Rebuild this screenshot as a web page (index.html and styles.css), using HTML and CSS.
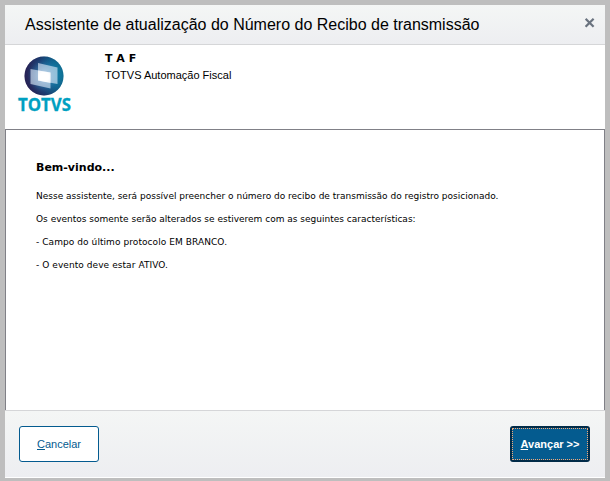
FILE: index.html
```html
<!DOCTYPE html>
<html lang="pt-BR">
<head>
<meta charset="UTF-8" />
<meta name="viewport" content="width=device-width, initial-scale=1" />
<title>Assistente de atualização</title>
<link rel="stylesheet" href="styles.css">
</head>
<body>

<div class="dialog" role="dialog" aria-labelledby="dialog-title">
  <!-- Title bar -->
  <header class="title-bar">
    <h1 id="dialog-title">Assistente de atualização do Número do Recibo de transmissão</h1>
    <button class="close-btn" aria-label="Fechar">
      <svg width="10" height="10" viewBox="0 0 10 10">
        <path d="M0.6 0.8 L8.6 8.8 M8.6 0.8 L0.6 8.8" stroke="#6a737f" stroke-width="2.2" />
      </svg>
    </button>
  </header>

  <!-- Product logo and name -->
  <section class="product">
    <svg class="logo" width="76" height="68" viewBox="0 0 76 68">
      <defs>
        <linearGradient id="ball" x1="0.1" y1="0.6" x2="1" y2="0.45">
          <stop offset="0" stop-color="#2a2458" />
          <stop offset="0.4" stop-color="#1c4378" />
          <stop offset="0.75" stop-color="#0a80a8" />
          <stop offset="1" stop-color="#08a0bd" />
        </linearGradient>
        <radialGradient id="shade" cx="0.5" cy="0.5" r="0.5">
          <stop offset="0" stop-color="#8cc4e6" stop-opacity="0.9" />
          <stop offset="0.6" stop-color="#2f76a8" stop-opacity="0.4" />
          <stop offset="0.85" stop-color="#1d2f62" stop-opacity="0.3" />
          <stop offset="1" stop-color="#211c4c" stop-opacity="0.4" />
        </radialGradient>
        <radialGradient id="glow" cx="0.5" cy="0.5" r="0.75">
          <stop offset="0.5" stop-color="#fff" />
          <stop offset="1" stop-color="#fff" stop-opacity="0.6" />
        </radialGradient>
      </defs>
      <circle cx="27" cy="21" r="19.5" fill="url(#ball)" />
      <circle cx="27" cy="21" r="19.5" fill="url(#shade)" />
      <path d="M21 8 L40.5 12.5 V29 L21 25.5 Z" fill="#dfeaf8" fill-opacity="0.62" />
      <path d="M13.5 14 L33.5 17.5 V33.5 L13.5 29 Z" fill="#dfeaf8" fill-opacity="0.62" />
      <path d="M21 15.5 L33.5 17.5 V28 L21 25.5 Z" fill="url(#glow)" />
      <text class="logo-text" x="1" y="56" textLength="53" lengthAdjust="spacingAndGlyphs">TOTVS</text>
    </svg>
    <div class="product-info">
      <h2>T A F</h2>
      <p>TOTVS Automação Fiscal</p>
    </div>
  </section>

  <!-- Wizard page -->
  <main class="page">
    <h3>Bem-vindo...</h3>
    <p>Nesse assistente, será possível preencher o número do recibo de transmissão do registro posicionado.</p>
    <p>Os eventos somente serão alterados se estiverem com as seguintes características:</p>
    <p class="item">- Campo do último protocolo EM BRANCO.</p>
    <p class="item">- O evento deve estar ATIVO.</p>
  </main>

  <footer class="actions">
    <button class="btn btn-cancel"><span><u>C</u>ancelar</span></button>
    <button class="btn btn-next"><span><u>A</u>vançar &gt;&gt;</span></button>
  </footer>
</div>

</body>
</html>
```

FILE: styles.css
```css
* {
  box-sizing: border-box;
}
body {
  margin: 0;
  padding: 5px 5px 3px;
  height: 481px;
  background: #bebebe;
  font-family: "Liberation Sans", Arial, sans-serif;
  color: #000;
  overflow: hidden;
}
h1, h2, h3, p {
  margin: 0;
  font-weight: normal;
  white-space: nowrap;
}
button {
  font-family: inherit;
  cursor: pointer;
}

.dialog {
  display: flex;
  flex-direction: column;
  height: 473px;
  background: #fff;
}

/* Title bar */
.title-bar {
  display: flex;
  justify-content: space-between;
  height: 40px;
  padding: 0 10px 0 20px;
  background: linear-gradient(#f4f6f5, #edeef1);
  border-bottom: 1px solid #d5d6d8;
}
.title-bar h1 {
  font-size: 16px;
  line-height: 39px;
}
.close-btn {
  display: flex;
  margin-top: 13px;
  width: 10px;
  height: 10px;
  padding: 0;
  background: none;
  border: none;
}

/* Product */
.product {
  display: flex;
  height: 84px;
  padding-left: 12px;
}
.logo {
  margin-top: 10px;
  overflow: visible;
}
.logo-text {
  font: bold 18px "Open Sans", sans-serif;
  fill: #00a0c1;
  stroke: #00a0c1;
  stroke-width: 0.3px;
}
.product-info {
  margin: 6px 0 0 12px;
}
.product-info h2 {
  font: bold 11px/16px "DejaVu Sans", Verdana, sans-serif;
}
.product-info p {
  font-size: 11px;
  line-height: 16px;
}

/* Wizard page */
.page {
  height: 281px;
  padding: 29px 30px 0;
  border: 1px solid #808087;
  border-bottom: none;
  font-family: "DejaVu Sans", Verdana, sans-serif;
}
.page h3 {
  font-size: 11px;
  font-weight: bold;
  line-height: 18px;
  margin-bottom: 8px;
}
.page p {
  font-size: 9px;
  line-height: 23px;
}
.page .item {
  letter-spacing: 0.07px;
}

/* Buttons */
.actions {
  display: flex;
  justify-content: space-between;
  height: 68px;
  padding: 15px 15px 0 14px;
  background: linear-gradient(#f4f6f5, #edeef1);
  border-top: 1px solid #d5d6d8;
  border-bottom: 1px solid #fff;
}
.btn {
  width: 80px;
  height: 36px;
  padding: 0;
  border-radius: 3px;
  font-size: 11px;
}
.btn u {
  text-underline-offset: 1px;
}
.btn-cancel {
  background: #fff;
  border: 1px solid #045b8f;
  color: #045b8f;
}
.btn-next {
  background: #045b8f;
  border: 2px solid #012b48;
  color: #fff;
  font-weight: bold;
  outline: 1px dotted #f4aa78;
  outline-offset: -3px;
}
```
